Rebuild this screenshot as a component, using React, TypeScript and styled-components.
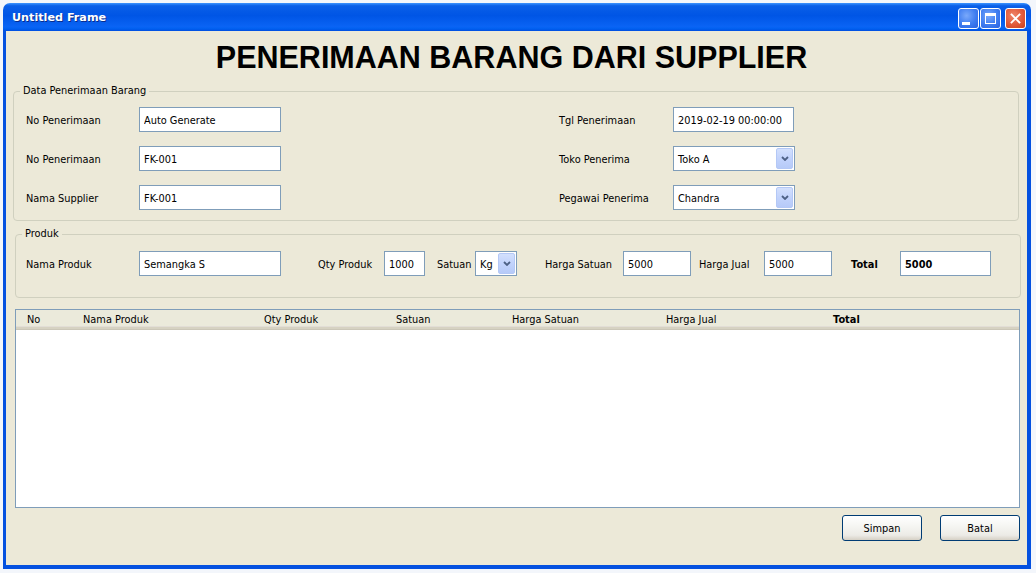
import React from 'react';
import styled, { createGlobalStyle } from 'styled-components';

const Global = createGlobalStyle`
  html, body { margin: 0; padding: 0; background: #f3f6fb; }
  body { font-family: "DejaVu Sans", Verdana, sans-serif; overflow: hidden; color: #000; }
  * { box-sizing: border-box; }
`;

const Page = styled.div`
  width: 1036px;
  height: 573px;
  padding: 3px 5px 4px 3px;
  display: flex;
`;

const Window = styled.div`
  flex: 1;
  display: flex;
  flex-direction: column;
`;

const TitleBar = styled.div`
  height: 28px;
  flex: none;
  border-radius: 7px 7px 0 0;
  background: linear-gradient(180deg, #3d95ff 0%, #0a5fe8 10%, #0055e5 45%, #0a64f5 85%, #0060f0 92%, #004ee0 100%);
  display: flex;
  align-items: center;
  padding: 0 5px 0 9px;
`;

const Title = styled.span`
  color: #fff;
  font-family: "DejaVu Sans", Verdana, sans-serif;
  font-weight: bold;
  font-size: 11.2px;
  text-shadow: 1px 1px 0 #0a2c8c;
`;

const Controls = styled.div`
  margin-left: auto;
  margin-top: 3px;
  display: flex;
  gap: 1px;
`;

const CtlButton = styled.div<{ $close?: boolean }>`
  width: 21px;
  height: 21px;
  border: 1px solid #fff;
  border-radius: 3px;
  margin-left: ${p => (p.$close ? '3px' : '0')};
  background: ${p =>
    p.$close
      ? 'radial-gradient(circle at 40% 35%, #f0876a 0%, #e0593a 55%, #c8401c 100%)'
      : 'radial-gradient(circle at 40% 35%, #7aa9fb 0%, #3f7df0 55%, #2a62e0 100%)'};
  display: flex;
  align-items: center;
  justify-content: center;
`;

const MinGlyph = styled.span`
  width: 8px;
  height: 3px;
  background: #fff;
  margin: 9px 6px 0 0;
`;

const MaxGlyph = styled.span`
  width: 11px;
  height: 11px;
  border: 1px solid #fff;
  border-top-width: 3px;
`;

const Frame = styled.div`
  flex: 1;
  display: flex;
  flex-direction: column;
  background: #ece9d8;
  border-style: solid;
  border-color: #0451e0;
  border-width: 0 4px 4px 3px;
`;

const Heading = styled.h1`
  margin: 8px 0 0;
  padding-right: 10px;
  text-align: center;
  font-family: "Liberation Sans", Arial, sans-serif;
  font-weight: bold;
  font-size: 30.5px;
  line-height: 36px;
  color: #000;
`;

const Group = styled.fieldset<{ $mt: number; $ml: number }>`
  margin: ${p => p.$mt}px 0 0 ${p => p.$ml}px;
  width: 1006px;
  min-width: 0;
  padding: 0;
  border: 1px solid #d0d0bf;
  border-radius: 4px;
`;

const Legend = styled.legend`
  margin-left: 6px;
  padding: 0 3px;
  font-size: 9.8px;
  line-height: 12px;
`;

const FormGrid = styled.div`
  display: grid;
  grid-template-columns: 113px 142px 278px 114px 122px;
  grid-auto-rows: 25px;
  row-gap: 14px;
  align-items: center;
  padding: 10px 0 10px 12px;
`;

const ProductRow = styled.div`
  display: flex;
  align-items: center;
  padding: 11px 0 21px 10px;
`;

const Label = styled.span<{ $w?: number; $ml?: number; $bold?: boolean }>`
  flex: none;
  width: ${p => (p.$w ? `${p.$w}px` : 'auto')};
  margin-left: ${p => p.$ml ?? 0}px;
  padding-top: 1px;
  font-size: 9.8px;
  font-weight: ${p => (p.$bold ? 'bold' : 'normal')};
  white-space: nowrap;
`;

const Field = styled.input<{ $w: number; $bold?: boolean }>`
  flex: none;
  width: ${p => p.$w}px;
  height: 25px;
  border: 1px solid #7f9db9;
  background: #fff;
  padding: 1px 4px 0;
  margin: 0;
  font-family: "DejaVu Sans", Verdana, sans-serif;
  font-size: 9.8px;
  font-weight: ${p => (p.$bold ? 'bold' : 'normal')};
  color: #000;
  outline: none;
`;

const Combo = styled.div<{ $w: number }>`
  flex: none;
  width: ${p => p.$w}px;
  height: 25px;
  border: 1px solid #7f9db9;
  background: #fff;
  display: flex;
  align-items: stretch;
  padding: 1px;
`;

const ComboText = styled.span`
  flex: 1;
  display: flex;
  align-items: center;
  padding: 1px 0 0 3px;
  font-size: 9.8px;
  white-space: nowrap;
  overflow: hidden;
`;

const ComboButton = styled.span`
  width: 17px;
  border: 1px solid #b4c8f6;
  border-radius: 2px;
  background: linear-gradient(180deg, #d3e0fd 0%, #c2d3fc 50%, #b6caf8 100%);
  display: flex;
  align-items: center;
  justify-content: center;
`;

const Table = styled.div`
  margin: 11px 0 0 9px;
  width: 1005px;
  height: 199px;
  border: 1px solid #7f9db9;
  background: #fff;
  display: flex;
  flex-direction: column;
`;

const HeaderRow = styled.div`
  display: grid;
  grid-template-columns: 56px 181px 132px 116px 154px 167px 1fr;
  height: 20px;
  align-items: center;
  background: #ebeadb;
  border-bottom: 1px solid #cbc7b8;
  box-shadow: inset 0 -2px 0 #d6d2c2, inset 0 -3px 0 #e2ded6;
`;

const HeaderCell = styled.span<{ $bold?: boolean }>`
  padding-left: 11px;
  padding-bottom: 1px;
  font-size: 9.8px;
  font-weight: ${p => (p.$bold ? 'bold' : 'normal')};
  white-space: nowrap;
`;

const ButtonBar = styled.div`
  margin-top: 7px;
  display: flex;
  justify-content: flex-end;
  gap: 18px;
  padding-right: 7px;
`;

const Button = styled.button`
  width: 80px;
  height: 26px;
  border: 1px solid #003c74;
  border-radius: 3px;
  background: linear-gradient(180deg, #ffffff 0%, #f6f6f3 40%, #ecebe6 80%, #d6d0c5 100%);
  font-family: "DejaVu Sans", Verdana, sans-serif;
  font-size: 9.8px;
  color: #000;
  padding: 0;
`;

const Chevron = () => (
  <svg width="8" height="5" viewBox="0 0 8 5">
    <polyline points="1,1 4,4 7,1" fill="none" stroke="#4d6185" strokeWidth="1.8" />
  </svg>
);

const CloseX = () => (
  <svg width="11" height="11" viewBox="0 0 11 11">
    <path d="M1.5 1.5 L9.5 9.5 M9.5 1.5 L1.5 9.5" stroke="#fff" strokeWidth="1.8" strokeLinecap="square" />
  </svg>
);

const ComboBox = ({ w, value }: { w: number; value: string }) => (
  <Combo $w={w}>
    <ComboText>{value}</ComboText>
    <ComboButton>
      <Chevron />
    </ComboButton>
  </Combo>
);

export default function App() {
  return (
    <>
      <Global />
      <Page>
        <Window>
          <TitleBar>
            <Title>Untitled Frame</Title>
            <Controls>
              <CtlButton>
                <MinGlyph />
              </CtlButton>
              <CtlButton>
                <MaxGlyph />
              </CtlButton>
              <CtlButton $close>
                <CloseX />
              </CtlButton>
            </Controls>
          </TitleBar>
          <Frame>
            <Heading>PENERIMAAN BARANG DARI SUPPLIER</Heading>

            <Group $mt={10} $ml={7}>
              <Legend>Data Penerimaan Barang</Legend>
              <FormGrid>
                <Label>No Penerimaan</Label>
                <Field $w={142} readOnly value="Auto Generate" />
                <span />
                <Label>Tgl Penerimaan</Label>
                <Field $w={121} readOnly value="2019-02-19 00:00:00" />

                <Label>No Penerimaan</Label>
                <Field $w={142} readOnly value="FK-001" />
                <span />
                <Label>Toko Penerima</Label>
                <ComboBox w={122} value="Toko A" />

                <Label>Nama Supplier</Label>
                <Field $w={142} readOnly value="FK-001" />
                <span />
                <Label>Pegawai Penerima</Label>
                <ComboBox w={122} value="Chandra" />
              </FormGrid>
            </Group>

            <Group $mt={7} $ml={9}>
              <Legend>Produk</Legend>
              <ProductRow>
                <Label $w={113}>Nama Produk</Label>
                <Field $w={142} readOnly value="Semangka S" />
                <Label $w={66} $ml={37}>Qty Produk</Label>
                <Field $w={41} readOnly value="1000" />
                <Label $w={38} $ml={12}>Satuan</Label>
                <ComboBox w={42} value="Kg" />
                <Label $w={78} $ml={28}>Harga Satuan</Label>
                <Field $w={68} readOnly value="5000" />
                <Label $w={65} $ml={8}>Harga Jual</Label>
                <Field $w={68} readOnly value="5000" />
                <Label $w={49} $ml={19} $bold>Total</Label>
                <Field $w={91} $bold readOnly value="5000" />
              </ProductRow>
            </Group>

            <Table>
              <HeaderRow>
                <HeaderCell>No</HeaderCell>
                <HeaderCell>Nama Produk</HeaderCell>
                <HeaderCell>Qty Produk</HeaderCell>
                <HeaderCell>Satuan</HeaderCell>
                <HeaderCell>Harga Satuan</HeaderCell>
                <HeaderCell>Harga Jual</HeaderCell>
                <HeaderCell $bold>Total</HeaderCell>
              </HeaderRow>
            </Table>

            <ButtonBar>
              <Button>Simpan</Button>
              <Button>Batal</Button>
            </ButtonBar>
          </Frame>
        </Window>
      </Page>
    </>
  );
}
